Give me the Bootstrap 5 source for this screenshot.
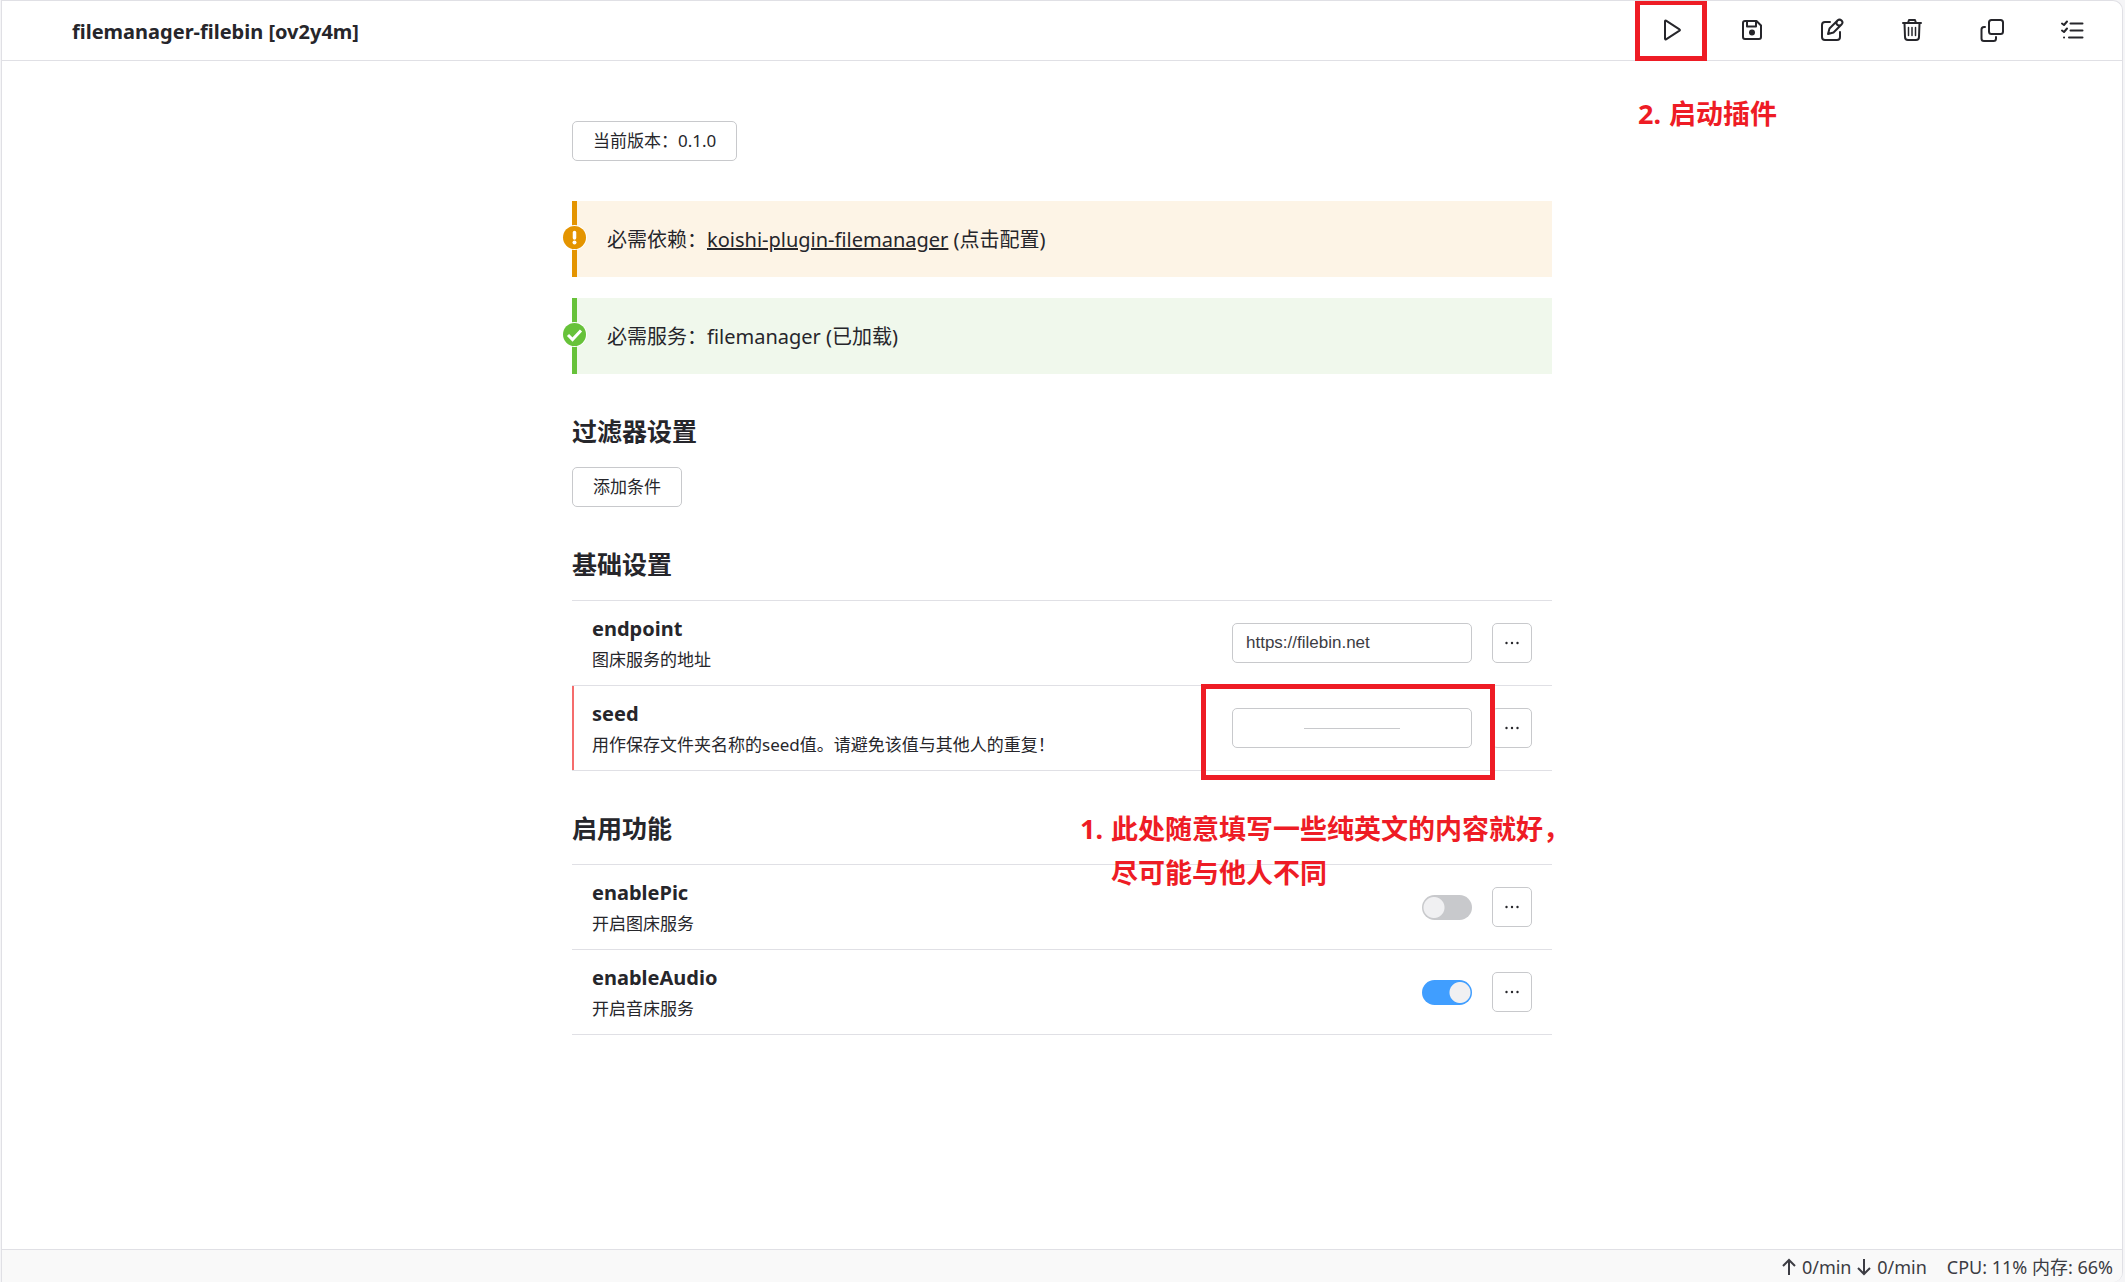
<!DOCTYPE html>
<html lang="zh-CN">
<head>
<meta charset="utf-8">
<meta name="viewport" content="width=device-width, initial-scale=1">
<title>filemanager-filebin [ov2y4m]</title>
<link href="https://cdn.jsdelivr.net/npm/bootstrap@5.3.0/dist/css/bootstrap.min.css" rel="stylesheet">
<style>
:root{--ink:#26262b;--line:#e0e0e5;--edge:#c8c9cc;--mark:#ee1c25}
body{font-family:"Noto Sans","Noto Sans CJK SC",sans-serif;font-size:17px;line-height:24px;color:var(--ink);background:#f5f5f7}
.app-shell{min-height:100vh;margin:0 2px 0 1px;background:#fff;border:solid var(--line);border-width:1px 1px 0 1px;border-radius:0 10px 10px 0;overflow:hidden}
.app-header{height:60px;border-bottom:1px solid var(--line);padding:0 10px 0 70px}
.app-title{font-size:20px;font-weight:700;line-height:28px;margin:0;padding-top:2px}
.tool-btn{width:80px;height:58px;border:0;background:none;padding:0;color:var(--ink);display:flex;align-items:center;justify-content:center}
.tool-btn svg{width:24px;height:24px;fill:none;stroke:currentColor;stroke-width:2;stroke-linecap:round;stroke-linejoin:round}
.app-main{padding:60px 20px}
.content-col{max-width:980px;margin:0 auto}
.plain-btn{height:40px;padding:0 20px;border:1px solid var(--edge);border-radius:5px;background:#fff;color:var(--ink);font-size:17px;line-height:24px}
.more-btn{width:40px;padding:0;display:flex;align-items:center;justify-content:center}
.more-btn svg{width:16px;height:16px;fill:currentColor}
.notice-list{margin-top:40px;display:grid;gap:21px}
.notice{position:relative;height:76px;padding:2px 30px 0;border-left:5px solid;font-size:20px;line-height:28px;margin:0}
.notice a{color:inherit;text-decoration:underline}
.notice .ink{color:var(--ink)}
.notice-icon{position:absolute;left:-15px;top:24px;width:25px;height:25px}
.notice-warn{border-color:#e49400;background:#fdf4e6}
.notice-ok{border-color:#67c23a;background:#f0f8ec}
.sect{position:relative;padding-top:39px}
.sect-title{font-size:25px;line-height:36px;font-weight:700;margin:0 0 18px}
.setting-list{border-top:1px solid var(--line)}
.setting{position:relative;height:85px;padding:0 20px;border-bottom:1px solid var(--line)}
.setting.required{box-shadow:inset 2px 0 #f56c6c}
.setting-name{display:block;font-size:20px;line-height:28px;font-weight:700}
.setting-desc{line-height:24px;margin:5px 0 0}
.setting-tools{gap:20px}
.text-box{width:240px;height:40px;border:1px solid var(--edge);border-radius:5px;padding:0 13px;font:17px "Liberation Sans",sans-serif;color:#3c3c43;background:#fff}
.text-box.blank{background:linear-gradient(var(--edge),var(--edge)) center/96px 1px no-repeat #fff}
.form-check-input.toggle{width:50px;height:25px;margin:0;border:0;background:radial-gradient(circle,#f0f0f2 0 10px,transparent 11px) -13px center/50px 25px no-repeat #c8c9cc;border-radius:13px}
.form-check-input.toggle:checked{background-color:#409eff;background-position:13px center}
.mark-box{position:absolute;border:5px solid var(--mark);pointer-events:none}
.mark-play{left:3px;top:-1px;width:72px;height:61px}
.mark-seed{right:57px;top:-2px;width:294px;height:96px;z-index:2}
.mark-text{position:absolute;display:flex;gap:8px;color:var(--mark);font-size:27px;line-height:44px;font-weight:700;white-space:nowrap;margin:0;pointer-events:none}
.mark-start{left:6px;top:91px;z-index:2}
.mark-fill{left:508px;top:36px;z-index:2}
.app-status{height:33px;border-top:1px solid var(--line);background:#f9f9f9;padding:2px 9px 0;color:#3c3c43;font-size:18px;gap:20px}
.app-status svg{width:16px;height:18px;margin-right:5px;fill:none;stroke:currentColor;stroke-width:2}
</style>
<script src="https://cdn.jsdelivr.net/npm/bootstrap@5.3.0/dist/js/bootstrap.bundle.min.js"></script>
</head>
<body>
<div class="app-shell d-flex flex-column">
  <header class="app-header d-flex align-items-start justify-content-between">
    <h1 class="app-title align-self-center">filemanager-filebin [ov2y4m]</h1>
    <div class="d-flex">
      <div class="position-relative">
        <button class="tool-btn" type="button" aria-label="启动"><svg viewBox="0 0 24 24"><path d="M5 3.200v17.600a.7.7 0 0 0 1 .6L19.500 12.700a.8.8 0 0 0 0-1.400L6 2.600a.7.7 0 0 0-1 .6z"/></svg></button>
        <span class="mark-box mark-play"></span>
        <p class="mark-text mark-start"><span>2.</span><span>启动插件</span></p>
      </div>
      <button class="tool-btn" type="button" aria-label="保存"><svg viewBox="0 0 24 24"><path d="M5 3h11.500L21 7.500V19a2 2 0 0 1-2 2H5a2 2 0 0 1-2-2V5a2 2 0 0 1 2-2zM7 3v5.500h9V3"/><circle cx="12" cy="14.500" r="2" fill="currentColor"/></svg></button>
      <button class="tool-btn" type="button" aria-label="编辑"><svg viewBox="0 0 24 24"><path d="M10 4H5a3 3 0 0 0-3 3v12a3 3 0 0 0 3 3h12a3 3 0 0 0 3-3v-5M8 16l1.500-5.500L17.500 2.500a2.500 2.500 0 0 1 4 4L13.500 14.500zM17 3.500a2.500 2.500 0 0 0 3.500 3.500"/></svg></button>
      <button class="tool-btn" type="button" aria-label="删除"><svg viewBox="0 0 24 24"><path d="M3 5h18M4.500 5l.5 14a3 3 0 0 0 3 3h8a3 3 0 0 0 3-3l.5-14M8 5l1-3h6l1 3"/><path stroke-width="1.500" d="M8.500 9.500v8M12 9.500v8M15.500 9.500v8"/></svg></button>
      <button class="tool-btn" type="button" aria-label="复制"><svg viewBox="0 0 24 24"><rect x="9" y="2" width="14" height="14" rx="2.500"/><path d="M5 9H4a2.500 2.500 0 0 0-2.500 2.500v9A2.500 2.500 0 0 0 4 23h9.500a2.500 2.500 0 0 0 2.500-2.500V19"/></svg></button>
      <button class="tool-btn" type="button" aria-label="列表"><svg viewBox="0 0 24 24"><path d="M10.500 5.500h12M10.500 12.500h12M9 19.500h13.500M2 5.500l2 1.500L7 3.500M2 12.500l2 1.500L7 10.500M4 19.500h.1"/></svg></button>
    </div>
  </header>

  <main class="app-main flex-grow-1">
    <div class="content-col">
      <button class="plain-btn" type="button">当前版本：0.1.0</button>

      <div class="notice-list">
        <p class="notice notice-warn d-flex align-items-center">
          <svg class="notice-icon" viewBox="0 0 25 25"><circle cx="12.500" cy="12.500" r="12.500" fill="#fff"/><circle cx="12.500" cy="12.500" r="11.500" fill="#e49400"/><path d="M12.500 7.500v5.500" stroke="#fff" stroke-width="3.500" stroke-linecap="round"/><circle cx="12.500" cy="17.500" r="2" fill="#fff"/></svg>
          <span class="ink">必需依赖：<a href="#">koishi-plugin-filemanager</a> (点击配置)</span>
        </p>
        <p class="notice notice-ok d-flex align-items-center">
          <svg class="notice-icon" viewBox="0 0 25 25"><circle cx="12.500" cy="12.500" r="12.500" fill="#fff"/><circle cx="12.500" cy="12.500" r="11.500" fill="#67c23a"/><path d="M6 13l4.500 4.500L19 8.500" fill="none" stroke="#fff" stroke-width="3"/></svg>
          <span class="ink">必需服务：filemanager (已加载)</span>
        </p>
      </div>

      <section class="sect">
        <h2 class="sect-title">过滤器设置</h2>
        <button class="plain-btn d-block" type="button">添加条件</button>
      </section>

      <section class="sect">
        <h2 class="sect-title">基础设置</h2>
        <div class="setting-list">
          <div class="setting d-flex align-items-center justify-content-between">
            <div>
              <label class="setting-name" for="endpoint">endpoint</label>
              <p class="setting-desc">图床服务的地址</p>
            </div>
            <div class="setting-tools d-flex align-items-center">
              <input class="text-box" id="endpoint" type="text" value="https://filebin.net">
              <button class="plain-btn more-btn" type="button" aria-label="更多"><svg viewBox="0 0 16 16"><circle cx="2.500" cy="8" r="1.200"/><circle cx="8" cy="8" r="1.200"/><circle cx="13.500" cy="8" r="1.200"/></svg></button>
            </div>
          </div>
          <div class="setting required d-flex align-items-center justify-content-between">
            <div>
              <label class="setting-name" for="seed">seed</label>
              <p class="setting-desc">用作保存文件夹名称的seed值。请避免该值与其他人的重复！</p>
            </div>
            <div class="setting-tools d-flex align-items-center">
              <input class="text-box blank" id="seed" type="text">
              <button class="plain-btn more-btn" type="button" aria-label="更多"><svg viewBox="0 0 16 16"><circle cx="2.500" cy="8" r="1.200"/><circle cx="8" cy="8" r="1.200"/><circle cx="13.500" cy="8" r="1.200"/></svg></button>
            </div>
            <span class="mark-box mark-seed"></span>
          </div>
        </div>
      </section>

      <section class="sect">
        <h2 class="sect-title">启用功能</h2>
        <p class="mark-text mark-fill"><span>1.</span><span>此处随意填写一些纯英文的内容就好，<br>尽可能与他人不同</span></p>
        <div class="setting-list">
          <div class="setting d-flex align-items-center justify-content-between">
            <div>
              <label class="setting-name" for="enablePic">enablePic</label>
              <p class="setting-desc">开启图床服务</p>
            </div>
            <div class="setting-tools d-flex align-items-center">
              <input class="form-check-input toggle" id="enablePic" type="checkbox" role="switch">
              <button class="plain-btn more-btn" type="button" aria-label="更多"><svg viewBox="0 0 16 16"><circle cx="2.500" cy="8" r="1.200"/><circle cx="8" cy="8" r="1.200"/><circle cx="13.500" cy="8" r="1.200"/></svg></button>
            </div>
          </div>
          <div class="setting d-flex align-items-center justify-content-between">
            <div>
              <label class="setting-name" for="enableAudio">enableAudio</label>
              <p class="setting-desc">开启音床服务</p>
            </div>
            <div class="setting-tools d-flex align-items-center">
              <input class="form-check-input toggle" id="enableAudio" type="checkbox" role="switch" checked>
              <button class="plain-btn more-btn" type="button" aria-label="更多"><svg viewBox="0 0 16 16"><circle cx="2.500" cy="8" r="1.200"/><circle cx="8" cy="8" r="1.200"/><circle cx="13.500" cy="8" r="1.200"/></svg></button>
            </div>
          </div>
        </div>
      </section>
    </div>
  </main>

  <footer class="app-status d-flex align-items-center justify-content-end">
    <span class="d-flex align-items-center"><svg viewBox="0 0 16 18"><path d="M8 17V2M2 8l6-6 6 6"/></svg>0/min&nbsp;<svg viewBox="0 0 16 18"><path d="M8 1v15M2 10l6 6 6-6"/></svg>0/min</span>
    <span>CPU: 11% 内存: 66%</span>
  </footer>
</div>
</body>
</html>
